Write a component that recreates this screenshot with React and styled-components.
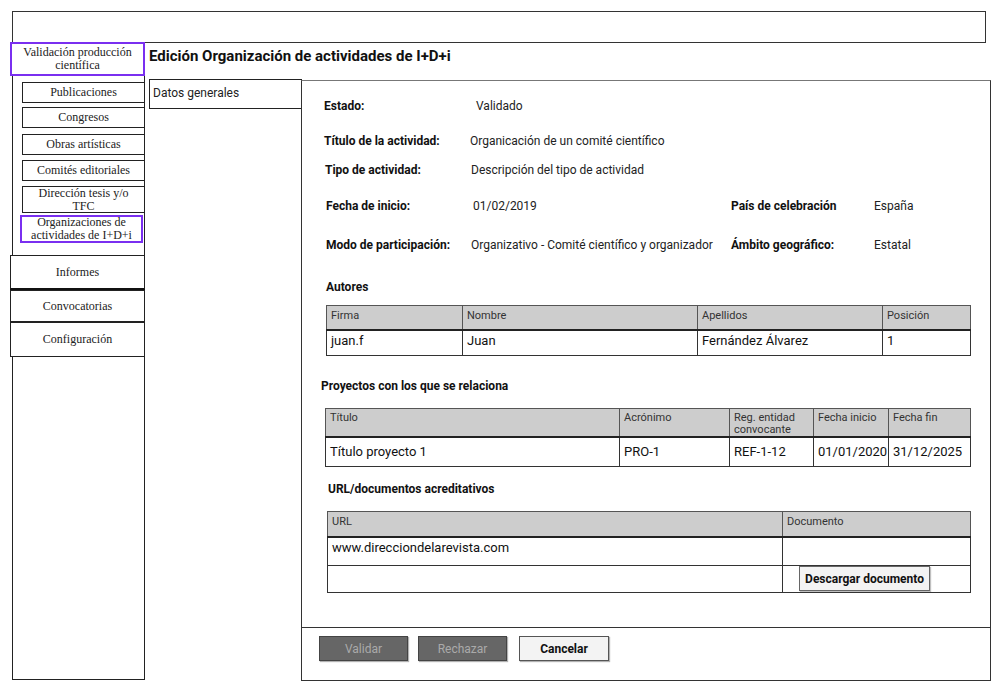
import React from 'react';
import styled, { createGlobalStyle } from 'styled-components';

const Global = createGlobalStyle`
  html, body { margin: 0; padding: 0; background: #fff; }
  body { font-family: Roboto, "Liberation Sans", sans-serif; color: #222; }
  * { box-sizing: border-box; }
`;

const Page = styled.div`
  width: 1002px;
  height: 690px;
  padding-top: 11px;
  overflow: hidden;
`;

const TopBar = styled.div`
  margin-left: 12px;
  width: 974px;
  height: 32px;
  border: 1px solid #333;
`;

const Main = styled.div`
  display: flex;
  align-items: flex-start;
`;

const Sidebar = styled.nav`
  margin-left: 12px;
  width: 133px;
  height: 637px;
  border: 1px solid #222;
  border-top: none;
  display: flex;
  flex-direction: column;
  font-family: "Liberation Serif", "DejaVu Serif", serif;
  font-size: 12px;
  color: #222;
`;

const NavItem = styled.div`
  display: flex;
  align-items: center;
  justify-content: center;
  text-align: center;
  line-height: 13px;
  background: #fff;
  margin-top: ${p => p.$mt || 0}px;
  margin-left: ${p => (p.$sub ? (p.$active ? 7 : 9) : -3)}px;
  width: ${p => (p.$sub ? 123 : 135)}px;
  height: ${p => p.$h}px;
  border: ${p => (p.$active ? '2px solid #7a2ff0' : '1px solid #222')};
  ${p => p.$thick && 'border-bottom: 2px solid #111;'}
  padding: 0 4px;
`;

const ContentCol = styled.div`
  flex: 1;
  display: flex;
  flex-direction: column;
`;

const Title = styled.h1`
  margin: 0;
  height: 36px;
  padding: 5px 0 0 4px;
  font-size: 15px;
  line-height: 16px;
  font-weight: 700;
  color: #111;
`;

const TabRow = styled.div`
  display: flex;
  align-items: flex-start;
`;

const Tab = styled.div`
  margin-left: 4px;
  width: 153px;
  height: 30px;
  border: 1px solid #222;
  padding: 6px 3px;
  font-size: 12px;
  line-height: 14px;
  color: #222;
`;

const Panel = styled.section`
  margin-left: -1px;
  margin-top: 1px;
  width: 690px;
  height: 601px;
  border: 1px solid #333;
  border-top-color: #777;
  display: flex;
  flex-direction: column;
`;

const Form = styled.div`
  flex: 1;
  padding: 17px 19px 0 22px;
  display: flex;
  flex-direction: column;
`;

const FieldRow = styled.div`
  display: grid;
  grid-template-columns: 146px 259px 143px auto;
  margin-top: ${p => p.$mt || 0}px;
  margin-left: ${p => p.$ml || 0}px;
  height: 16px;
  align-items: center;
  font-size: 12px;
  line-height: 16px;
`;

const Label = styled.span`
  font-weight: 700;
  color: #111;
  white-space: nowrap;
`;

const Value = styled.span`
  color: #222;
  white-space: nowrap;
  padding-left: ${p => p.$pl || 0}px;
`;

const SectionLabel = styled.div`
  margin-top: ${p => p.$mt || 0}px;
  margin-left: ${p => p.$ml || 0}px;
  height: 16px;
  line-height: 16px;
  font-size: 12px;
  font-weight: 700;
  color: #111;
`;

const Table = styled.table`
  margin-top: ${p => p.$mt || 0}px;
  margin-left: ${p => p.$ml || 0}px;
  width: ${p => p.$w || 645}px;
  border-collapse: collapse;
  table-layout: fixed;
  border: 1px solid #222;
`;

const HeadRow = styled.tr`
  height: ${p => p.$h}px;
`;

const Th = styled.th`
  background: #cdcdcd;
  font-weight: 400;
  font-size: 11px;
  line-height: 12px;
  color: #333;
  text-align: left;
  vertical-align: top;
  padding: 4px 4px 0;
  border: 1px solid #555;
  border-bottom: 2px solid #222;
`;

const BodyRow = styled.tr`
  height: ${p => p.$h}px;
`;

const Td = styled.td`
  font-size: 13px;
  line-height: 16px;
  color: #111;
  vertical-align: ${p => p.$valign || 'middle'};
  padding: ${p => (p.$valign === 'top' ? '2px 4px 0' : '0 4px')};
  border: 1px solid #333;
  white-space: nowrap;
  overflow: hidden;
`;

const DocButton = styled.button`
  display: block;
  margin-left: 16px;
  width: 131px;
  height: 25px;
  border: 1px solid #666;
  background: #f3f3f3;
  box-shadow: 1px 1px 1px rgba(0,0,0,0.25);
  font-family: Roboto, "Liberation Sans", sans-serif;
  font-size: 12px;
  font-weight: 700;
  color: #111;
  padding: 0;
`;

const Footer = styled.div`
  height: 53px;
  border-top: 1px solid #333;
  display: flex;
  gap: 10px;
  padding: 8px 17px;
  align-items: flex-start;
`;

const ActionButton = styled.button`
  width: ${p => (p.$primary ? 90 : 89)}px;
  height: 25px;
  padding: 0;
  font-family: Roboto, "Liberation Sans", sans-serif;
  font-size: 12px;
  border: 1px solid ${p => (p.$primary ? '#555' : '#444')};
  background: ${p => (p.$primary ? '#f3f3f3' : '#666')};
  color: ${p => (p.$primary ? '#111' : '#aaa')};
  font-weight: ${p => (p.$primary ? 700 : 400)};
  box-shadow: 1px 1px 1px rgba(0,0,0,0.3);
  margin-left: ${p => p.$ml || 0}px;
`;

const navItems = [
  { label: 'Publicaciones', mt: 6, h: 21 },
  { label: 'Congresos', mt: 4, h: 21 },
  { label: 'Obras artísticas', mt: 6, h: 21 },
  { label: 'Comités editoriales', mt: 5, h: 21 },
  { label: 'Dirección tesis y/o TFC', mt: 5, h: 27 },
];

export default function App() {
  return (
    <>
      <Global />
      <Page>
        <TopBar />
        <Main>
          <Sidebar>
            <NavItem $active $h={34} style={{ marginTop: -1 }}>
              Validación producción científica
            </NavItem>
            {navItems.map(n => (
              <NavItem key={n.label} $sub $mt={n.mt} $h={n.h}>
                {n.label}
              </NavItem>
            ))}
            <NavItem $sub $active $mt={2} $h={28}>
              Organizaciones de actividades de I+D+i
            </NavItem>
            <NavItem $mt={12} $h={35} $thick>Informes</NavItem>
            <NavItem $h={32}>Convocatorias</NavItem>
            <NavItem $h={35}>Configuración</NavItem>
          </Sidebar>
          <ContentCol>
            <Title>Edición Organización de actividades de I+D+i</Title>
            <TabRow>
              <Tab>Datos generales</Tab>
              <Panel>
                <Form>
                  <FieldRow>
                    <Label>Estado:</Label>
                    <Value $pl={6}>Validado</Value>
                  </FieldRow>
                  <FieldRow $mt={19}>
                    <Label>Título de la actividad:</Label>
                    <Value>Organicación de un comité científico</Value>
                  </FieldRow>
                  <FieldRow $mt={13} $ml={1}>
                    <Label>Tipo de actividad:</Label>
                    <Value>Descripción del tipo de actividad</Value>
                  </FieldRow>
                  <FieldRow $mt={20} $ml={2}>
                    <Label>Fecha de inicio:</Label>
                    <Value $pl={1}>01/02/2019</Value>
                    <Label>País de celebración</Label>
                    <Value>España</Value>
                  </FieldRow>
                  <FieldRow $mt={23} $ml={2}>
                    <Label>Modo de participación:</Label>
                    <Value style={{ marginLeft: -1 }}>Organizativo - Comité científico y organizador</Value>
                    <Label>Ámbito geográfico:</Label>
                    <Value>Estatal</Value>
                  </FieldRow>

                  <SectionLabel $mt={26} $ml={2}>Autores</SectionLabel>
                  <Table $mt={10} $ml={2}>
                    <colgroup>
                      <col style={{ width: 136 }} />
                      <col style={{ width: 235 }} />
                      <col style={{ width: 185 }} />
                      <col />
                    </colgroup>
                    <thead>
                      <HeadRow $h={24}>
                        <Th>Firma</Th>
                        <Th>Nombre</Th>
                        <Th>Apellidos</Th>
                        <Th>Posición</Th>
                      </HeadRow>
                    </thead>
                    <tbody>
                      <BodyRow $h={26}>
                        <Td $valign="top">juan.f</Td>
                        <Td $valign="top">Juan</Td>
                        <Td $valign="top">Fernández Álvarez</Td>
                        <Td $valign="top">1</Td>
                      </BodyRow>
                    </tbody>
                  </Table>

                  <SectionLabel $mt={22} $ml={-3}>Proyectos con los que se relaciona</SectionLabel>
                  <Table $mt={14} $ml={1} $w={646}>
                    <colgroup>
                      <col style={{ width: 294 }} />
                      <col style={{ width: 110 }} />
                      <col style={{ width: 84 }} />
                      <col style={{ width: 75 }} />
                      <col />
                    </colgroup>
                    <thead>
                      <HeadRow $h={27}>
                        <Th style={{ paddingTop: 3 }}>Título</Th>
                        <Th style={{ paddingTop: 3 }}>Acrónimo</Th>
                        <Th style={{ paddingTop: 3 }}>Reg. entidad convocante</Th>
                        <Th style={{ paddingTop: 3 }}>Fecha inicio</Th>
                        <Th style={{ paddingTop: 3 }}>Fecha fin</Th>
                      </HeadRow>
                    </thead>
                    <tbody>
                      <BodyRow $h={29}>
                        <Td>Título proyecto 1</Td>
                        <Td>PRO-1</Td>
                        <Td>REF-1-12</Td>
                        <Td>01/01/2020</Td>
                        <Td>31/12/2025</Td>
                      </BodyRow>
                    </tbody>
                  </Table>

                  <SectionLabel $mt={14} $ml={4}>URL/documentos acreditativos</SectionLabel>
                  <Table $mt={14} $ml={3} $w={644}>
                    <colgroup>
                      <col style={{ width: 455 }} />
                      <col />
                    </colgroup>
                    <thead>
                      <HeadRow $h={26}>
                        <Th>URL</Th>
                        <Th>Documento</Th>
                      </HeadRow>
                    </thead>
                    <tbody>
                      <BodyRow $h={28}>
                        <Td $valign="top">www.direcciondelarevista.com</Td>
                        <Td />
                      </BodyRow>
                      <BodyRow $h={27}>
                        <Td />
                        <Td style={{ padding: 0 }}>
                          <DocButton>Descargar documento</DocButton>
                        </Td>
                      </BodyRow>
                    </tbody>
                  </Table>
                </Form>
                <Footer>
                  <ActionButton>Validar</ActionButton>
                  <ActionButton>Rechazar</ActionButton>
                  <ActionButton $primary $ml={2}>Cancelar</ActionButton>
                </Footer>
              </Panel>
            </TabRow>
          </ContentCol>
        </Main>
      </Page>
    </>
  );
}
